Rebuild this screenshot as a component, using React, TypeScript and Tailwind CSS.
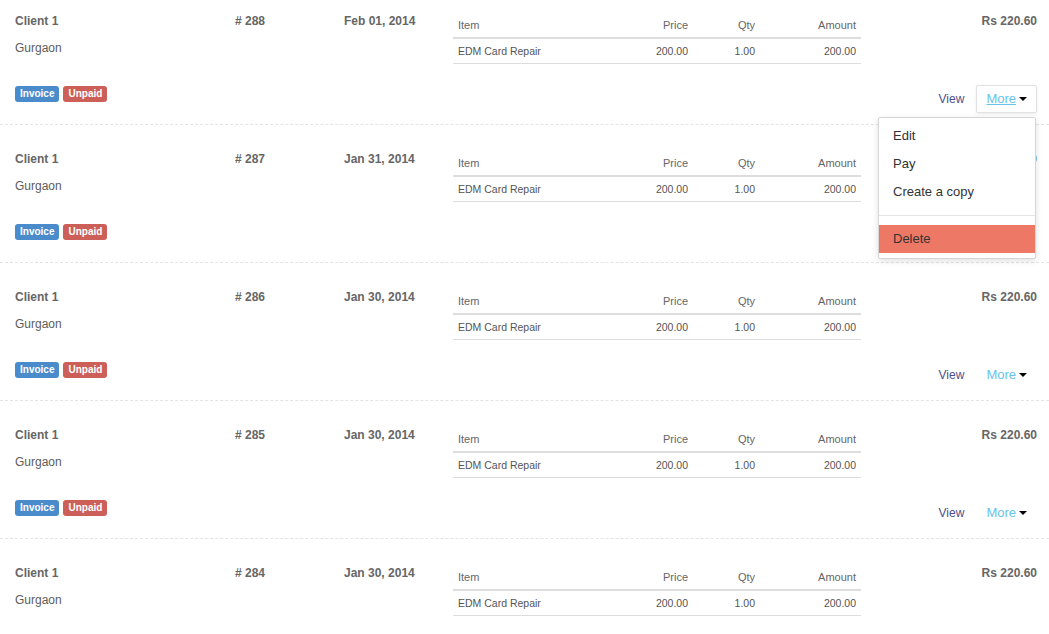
import React from "react";

const invoices = [
  { no: 288, date: "Feb 01, 2014", open: true },
  { no: 287, date: "Jan 31, 2014", open: false },
  { no: 286, date: "Jan 30, 2014", open: false },
  { no: 285, date: "Jan 30, 2014", open: false },
  { no: 284, date: "Jan 30, 2014", open: false },
];

function Caret() {
  return (
    <span className="ml-[3px] inline-block h-0 w-0 border-x-[4px] border-t-[4px] border-x-transparent border-t-black align-middle" />
  );
}

function ItemsTable() {
  return (
    <table className="mt-[26px] w-[408px] self-start table-fixed border-collapse text-[#555]">
      <colgroup>
        <col className="w-[160px]" />
        <col className="w-[80px]" />
        <col className="w-[67px]" />
        <col className="w-[101px]" />
      </colgroup>
      <thead>
        <tr className="border-b-2 border-[#dddddd] text-[11px] text-[#666]">
          <th className="h-[25px] px-[5px] text-left font-normal">Item</th>
          <th className="h-[25px] px-[5px] text-right font-normal">Price</th>
          <th className="h-[25px] px-[5px] text-right font-normal">Qty</th>
          <th className="h-[25px] px-[5px] text-right font-normal">Amount</th>
        </tr>
      </thead>
      <tbody>
        <tr className="border-b border-[#dddddd] text-[10.5px]">
          <td className="h-[25px] px-[5px]">EDM Card Repair</td>
          <td className="h-[25px] px-[5px] text-right">200.00</td>
          <td className="h-[25px] px-[5px] text-right">1.00</td>
          <td className="h-[25px] px-[5px] text-right">200.00</td>
        </tr>
      </tbody>
    </table>
  );
}

function MoreMenu() {
  return (
    <div className="absolute right-[1px] top-[32px] z-10 w-[158px] rounded-[2px] border border-[#d6d6d6] bg-white pb-[5px] pt-[4px] text-[13px] text-[#333] shadow-[0_2px_6px_rgba(0,0,0,0.12)]">
      <div className="flex h-[28px] items-center px-[14px]">Edit</div>
      <div className="flex h-[28px] items-center px-[14px]">Pay</div>
      <div className="flex h-[28px] items-center px-[14px]">Create a copy</div>
      <div className="mb-[9px] mt-[9px] h-px bg-[#e5e5e5]" />
      <div className="flex h-[28px] items-center bg-[#ee7866] px-[14px]">Delete</div>
    </div>
  );
}

function InvoiceRow({ no, date, open }: { no: number; date: string; open: boolean }) {
  return (
    <div className="flex h-[138px] border-b border-dashed border-[#e4e4e4] pl-[15px] pr-[12px] text-[12px] leading-[16px] text-[#5c5c5c]">
      <div className="w-[220px] pt-[26px]">
        <div className="font-bold text-[#666]">Client 1</div>
        <div className="mt-[11px]">Gurgaon</div>
        <div className="mt-[30px] flex gap-[4px] text-[10px] font-bold leading-[16px] text-white">
          <span className="rounded-[3px] bg-[#4a8bcb] px-[5px]">Invoice</span>
          <span className="rounded-[3px] bg-[#cc5f58] px-[5px]">Unpaid</span>
        </div>
      </div>
      <div className="w-[109px] pt-[26px] font-bold text-[#666]"># {no}</div>
      <div className="w-[109px] pt-[26px] font-bold text-[#666]">{date}</div>
      <ItemsTable />
      <div className="flex flex-1 flex-col items-end pb-[11px] pt-[26px]">
        <div className="font-bold text-[#666]">Rs 220.60</div>
        <div className="relative mt-auto flex items-center">
          <span className="mr-[12px] text-[#4c4f8d]">View</span>
          <div
            className={
              open
                ? "flex h-[28px] items-center rounded-[2px] border border-[#e2e2e2] bg-white px-[9px] shadow-[0_1px_3px_rgba(0,0,0,0.08)]"
                : "flex h-[28px] items-center border border-transparent px-[9px]"
            }
          >
            <span className={open ? "text-[13px] text-[#66c3ec] underline" : "text-[13px] text-[#66c3ec]"}>More</span>
            <Caret />
          </div>
          {open && <MoreMenu />}
        </div>
      </div>
    </div>
  );
}

export default function App() {
  return (
    <div className="h-[634px] w-[1049px] overflow-hidden bg-white font-['Liberation_Sans',Arial,sans-serif]">
      <div className="-mt-[13px]">
        {invoices.map((inv) => (
          <InvoiceRow key={inv.no} {...inv} />
        ))}
      </div>
    </div>
  );
}
